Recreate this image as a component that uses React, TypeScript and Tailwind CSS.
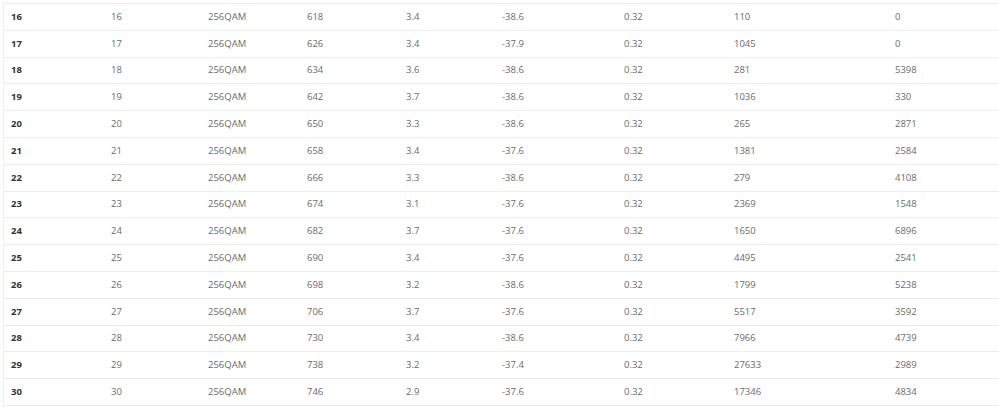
const rows = [
  [16, 16, '256QAM', 618, 3.4, -38.6, 0.32, 110, 0],
  [17, 17, '256QAM', 626, 3.4, -37.9, 0.32, 1045, 0],
  [18, 18, '256QAM', 634, 3.6, -38.6, 0.32, 281, 5398],
  [19, 19, '256QAM', 642, 3.7, -38.6, 0.32, 1036, 330],
  [20, 20, '256QAM', 650, 3.3, -38.6, 0.32, 265, 2871],
  [21, 21, '256QAM', 658, 3.4, -37.6, 0.32, 1381, 2584],
  [22, 22, '256QAM', 666, 3.3, -38.6, 0.32, 279, 4108],
  [23, 23, '256QAM', 674, 3.1, -37.6, 0.32, 2369, 1548],
  [24, 24, '256QAM', 682, 3.7, -37.6, 0.32, 1650, 6896],
  [25, 25, '256QAM', 690, 3.4, -37.6, 0.32, 4495, 2541],
  [26, 26, '256QAM', 698, 3.2, -38.6, 0.32, 1799, 5238],
  [27, 27, '256QAM', 706, 3.7, -37.6, 0.32, 5517, 3592],
  [28, 28, '256QAM', 730, 3.4, -38.6, 0.32, 7966, 4739],
  [29, 29, '256QAM', 738, 3.2, -37.4, 0.32, 27633, 2989],
  [30, 30, '256QAM', 746, 2.9, -37.6, 0.32, 17346, 4834],
];

const App = () => {
  return (
    <div className="w-[999px] h-[413px] bg-white overflow-hidden pt-[3px] pl-[3px]" style={{ fontFamily: '"Open Sans", sans-serif' }}>
      <div className="border-l border-[#eeeeee]">
        {rows.map((row) => (
          <div
            key={row[0]}
            className="grid grid-cols-[100px_97px_99px_99px_96px_122px_110px_161px_1fr] h-[26.8px] last:h-[27.8px] items-center border-t border-[#ececec] last:border-b text-[9.5px] text-[#6b6b6b]"
          >
            {row.map((cell, i) => (
              <div key={i} className={i === 0 ? 'pl-[7px] font-bold text-[#333333]' : 'pl-[7px]'}>
                {cell}
              </div>
            ))}
          </div>
        ))}
      </div>
    </div>
  );
}

export default App;
